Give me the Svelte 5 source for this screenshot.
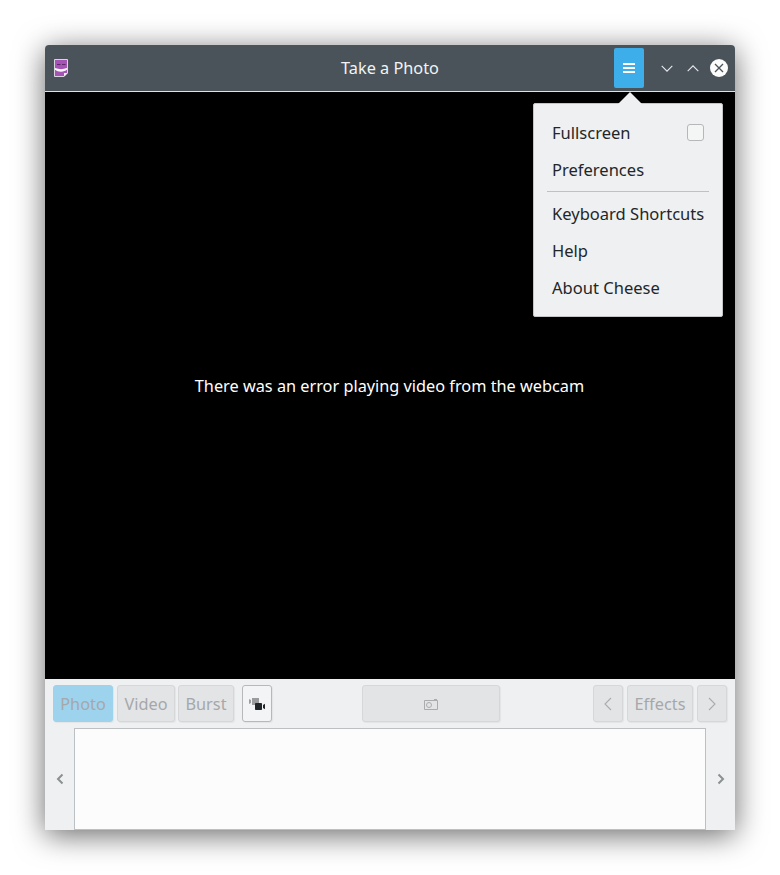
<script>
  const items = [
    { label: 'Fullscreen', check: true },
    { label: 'Preferences' },
    { sep: true },
    { label: 'Keyboard Shortcuts' },
    { label: 'Help' },
    { label: 'About Cheese' }
  ];
</script>

<div class="page">
  <div class="window">
    <header class="titlebar">
      <svg class="app-icon" width="14" height="18" viewBox="0 0 14 18">
        <path d="M.5 .5h13v13.500l-3.500 3.500h-9.500z" fill="#a653b6" stroke="#d8d6dc" />
        <path d="M1 9c4 1.500 8 1.500 12 0v1.500c-2.500 2.800-9 2.800-12 .3z" fill="#fbfbfb" />
        <path d="M3 5.500h3.500M8 5.500h3.500" stroke="#5d2a69" stroke-width="1.200" />
        <path d="M10 17.500v-3.500h3.500z" fill="#f3f3f4" />
      </svg>
      <span class="title">Take a Photo</span>
      <div class="controls">
        <button class="hamburger" aria-label="Menu">
          <svg width="12" height="10" viewBox="0 0 12 10"><path d="M0 1h12M0 5h12M0 9h12" stroke="#fff" stroke-width="2" /></svg>
        </button>
        <svg class="win-btn down" width="12" height="7" viewBox="0 0 12 7"><path d="M.7 .8l5.300 5.300 5.300-5.300" fill="none" stroke="#e8eaec" stroke-width="1.100" /></svg>
        <svg class="win-btn up" width="12" height="7" viewBox="0 0 12 7"><path d="M.7 6.200l5.300-5.300 5.300 5.300" fill="none" stroke="#e8eaec" stroke-width="1.100" /></svg>
        <svg class="win-btn close" width="18" height="18" viewBox="0 0 18 18"><circle cx="9" cy="9" r="9" fill="#fcfcfc" /><path d="M5 5l8 8M13 5l-8 8" stroke="#4a535a" stroke-width="1.300" /></svg>
      </div>
    </header>

    <main class="video">
      <p>There was an error playing video from the webcam</p>

      <div class="menu">
        <span class="arrow"></span>
        {#each items as item}
          {#if item.sep}
            <div class="sep"></div>
          {:else}
            <div class="item">
              <span>{item.label}</span>
              {#if item.check}<span class="checkbox"></span>{/if}
            </div>
          {/if}
        {/each}
      </div>
    </main>

    <section class="bottom">
      <div class="toolbar">
        <div class="group">
          <button class="btn active photo">Photo</button>
          <button class="btn video-btn">Video</button>
          <button class="btn burst">Burst</button>
          <button class="btn switch" aria-label="Switch camera">
            <svg width="16" height="12" viewBox="0 0 16 12">
              <path d="M0 1l2 1v3l-2 1z" fill="#9a9c9e" />
              <rect x="3" y="0" width="7" height="7" fill="#9a9c9e" />
              <rect x="6" y="5" width="7" height="7" rx=".8" fill="#232629" />
              <path d="M14 7l2-1.200v5.400L14 10z" fill="#232629" />
            </svg>
          </button>
        </div>
        <button class="btn shoot" aria-label="Take a photo">
          <svg width="14" height="12" viewBox="0 0 14 12">
            <path d="M.5 2.500h13v9H.500z" fill="none" stroke="#a9abad" />
            <circle cx="5" cy="7" r="2.500" fill="none" stroke="#a9abad" />
            <rect x="10" y="1" width="3" height="1.500" fill="#a9abad" />
          </svg>
        </button>
        <div class="group right">
          <button class="btn nav" aria-label="Previous effects">
            <svg width="8" height="14" viewBox="0 0 8 14"><path d="M7 1L1 7l6 6" fill="none" stroke="#a9abad" stroke-width="1.100" /></svg>
          </button>
          <button class="btn effects">Effects</button>
          <button class="btn nav" aria-label="Next effects">
            <svg width="8" height="14" viewBox="0 0 8 14"><path d="M1 1l6 6-6 6" fill="none" stroke="#a9abad" stroke-width="1.100" /></svg>
          </button>
        </div>
      </div>

      <div class="strip-row">
        <div class="side">
          <svg width="8" height="12" viewBox="0 0 8 12"><path d="M6.500 1.500L2 6l4.500 4.500" fill="none" stroke="#8b9092" stroke-width="2" /></svg>
        </div>
        <div class="strip"></div>
        <div class="side">
          <svg width="8" height="12" viewBox="0 0 8 12"><path d="M1.500 1.500L6 6l-4.500 4.500" fill="none" stroke="#8b9092" stroke-width="2" /></svg>
        </div>
      </div>
    </section>
  </div>
</div>

<style>
  :global(body) {
    margin: 0;
    background: #fff;
  }

  .page {
    box-sizing: border-box;
    height: 875px;
    padding: 45px 45px 0;
    overflow: hidden;
  }

  .window {
    width: 690px;
    height: 785px;
    display: flex;
    flex-direction: column;
    border-radius: 4px 4px 0 0;
    box-shadow: 0 5px 30px rgba(0, 0, 0, 0.6);
    font-family: "Noto Sans", sans-serif;
    font-size: 16.3px;
    color: #232629;
  }

  .titlebar {
    height: 46px;
    flex: none;
    display: flex;
    align-items: center;
    justify-content: center;
    position: relative;
    background: #4a535a;
    border-radius: 4px 4px 0 0;
    border-bottom: 1px solid #dfe1e3;
    color: #f2f3f4;
  }

  .app-icon {
    position: absolute;
    left: 9px;
    top: 14px;
  }

  .controls {
    position: absolute;
    top: 3px;
    right: 7px;
    display: flex;
    align-items: center;
    height: 40px;
  }

  .hamburger {
    width: 30px;
    height: 40px;
    padding: 0;
    margin-right: 17px;
    display: flex;
    align-items: center;
    justify-content: center;
    background: #3daee9;
    border: none;
    border-radius: 2px;
  }

  .win-btn {
    display: block;
    flex: none;
  }

  .down {
    margin-right: 14px;
  }

  .up {
    margin-right: 11px;
  }

  .video {
    position: relative;
    flex: 1;
    display: flex;
    align-items: center;
    justify-content: center;
    background: #000;
    color: #fff;
  }

  .video p {
    margin: 0 1px 0 0;
  }

  .menu {
    position: absolute;
    left: 488px;
    top: 11px;
    width: 190px;
    box-sizing: border-box;
    height: 214px;
    padding: 10px 13px 0 13px;
    background: #eff0f1;
    border: 1px solid #c2c4c6;
    border-radius: 2px;
    color: #232629;
    font-size: 16.55px;
  }

  .arrow {
    position: absolute;
    left: 84px;
    top: -12px;
    width: 0;
    height: 0;
    border-left: 12px solid transparent;
    border-right: 12px solid transparent;
    border-bottom: 12px solid #eff0f1;
  }

  .item {
    height: 37px;
    padding: 0 5px;
    display: flex;
    align-items: center;
    justify-content: space-between;
    white-space: nowrap;
  }

  .checkbox {
    width: 15px;
    height: 15px;
    border: 1px solid #b5b7b9;
    border-radius: 3px;
    background: #f4f5f5;
  }

  .sep {
    height: 1px;
    margin: 3px 0 3px;
    background: #bfc1c3;
  }

  .bottom {
    flex: none;
    height: 151px;
    background: #eff0f1;
    display: flex;
    flex-direction: column;
  }

  .toolbar {
    height: 37px;
    margin: 6px 8px 6px;
    display: flex;
    align-items: stretch;
  }

  .group {
    display: flex;
    gap: 4px;
  }

  .group.right {
    margin-left: auto;
  }

  .btn {
    box-sizing: border-box;
    height: 37px;
    padding: 0;
    display: flex;
    align-items: center;
    justify-content: center;
    font: inherit;
    color: #a5a8aa;
    background: #e3e4e6;
    border: 1px solid #d6d7d9;
    border-radius: 3px;
    box-shadow: 1px 1px 1px rgba(0, 0, 0, 0.05);
  }

  .photo {
    width: 60px;
    background: #9ed3ee;
    border-color: #9ed3ee;
  }

  .video-btn {
    width: 58px;
  }

  .burst {
    width: 56px;
    margin-left: -1px;
  }

  .switch {
    width: 30px;
    margin-left: 4px;
    background: #f3f4f5;
    border-color: #b6b8ba;
  }

  .shoot {
    width: 138px;
    margin-left: 90px;
  }

  .nav {
    width: 30px;
  }

  .effects {
    width: 66px;
  }

  .strip-row {
    flex: 1;
    display: flex;
  }

  .side {
    width: 29px;
    display: flex;
    align-items: center;
    justify-content: center;
  }

  .strip {
    flex: 1;
    background: #fcfcfc;
    border: 1px solid #bdc0c2;
  }
</style>
